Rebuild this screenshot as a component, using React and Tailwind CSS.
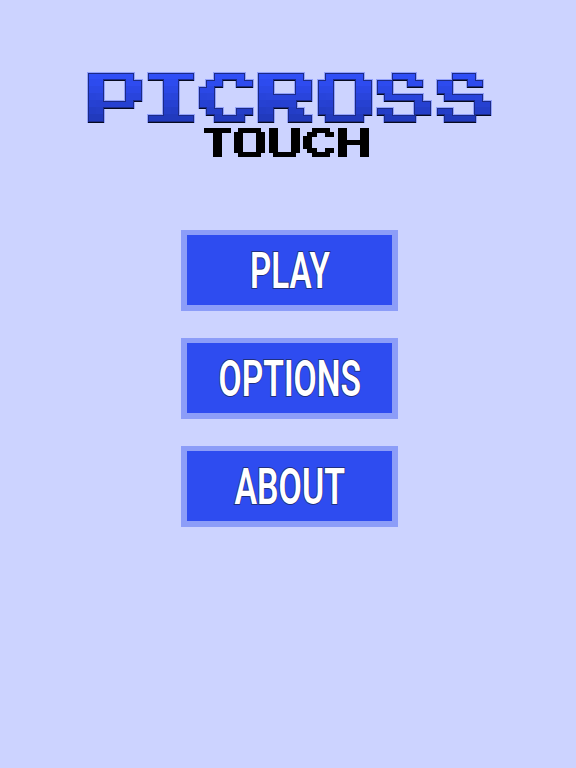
const MONO = "DejaVu Sans Mono";
const LIB = "Liberation Mono";

// How each character sits on the 7x7 block grid: font, scale (cells per em) and origin (cells).
const GLYPHS = {
  P: { font: "Liberation Sans", sx: 11.786, sy: 12.174, tx: -0.585, ty: 8.16 },
  I: { font: MONO, sx: 12.273, sy: 9.315, tx: -0.732, ty: 6.9 },
  C: { font: LIB, sx: 13.585, sy: 10.294, tx: -0.293, ty: 6.997 },
  R: { font: LIB, sx: 15.283, sy: 12.5, tx: -1.43, ty: 8.01 },
  O: { font: LIB, sx: 13.077, sy: 11.471, tx: -0.423, ty: 7.335 },
  S: { font: LIB, sx: 13.091, sy: 9.706, tx: -0.612, ty: 6.753 },
  T: { font: MONO, sx: 10.385, sy: 8.889, tx: -0.165, ty: 6.65 },
  U: { font: MONO, sx: 12.8, sy: 10, tx: -0.39, ty: 7.55 },
  H: { font: MONO, sx: 14.043, sy: 8.767, tx: -0.733, ty: 6.65 },
};

const LARGE = { id: "blocks-large", cw: 7.5, ch: 7, dx: 0.75, dy: 0, cols: [4, 11, 19, 26, 34, 41, 49], rows: [3, 10, 17, 24, 31, 38, 45], radius: "4 3" };
const SMALL = { id: "blocks-small", cw: 4.33, ch: 4, dx: 0.33, dy: 0.5, cols: [2, 6, 11, 15, 19, 24, 28], rows: [2, 6, 10, 14, 18, 22, 26], radius: "2 2" };

const TITLE = [["P", 60], ["I", 51], ["C", 59], ["R", 60], ["O", 59], ["S", 60], ["S", 54]];
const SUBTITLE = [["T", 30], ["O", 35], ["U", 34], ["C", 35], ["H", 31]];

function BlockFilter({ grid, outlined }) {
  return (
    <filter id={grid.id} filterUnits="userSpaceOnUse" x="-4" y="-4" width="66" height="60" colorInterpolationFilters="sRGB">
      {grid.cols.map((x, i) => (
        <feFlood key={"c" + i} x={x} y="0" width="1" height="52" floodColor="#000" result={"c" + i} />
      ))}
      <feMerge result="columns">
        {grid.cols.map((_, i) => <feMergeNode key={i} in={"c" + i} />)}
      </feMerge>
      {grid.rows.map((y, i) => (
        <feFlood key={"r" + i} x="0" y={y} width="58" height="1" floodColor="#000" result={"r" + i} />
      ))}
      <feMerge result="lines">
        {grid.rows.map((_, i) => <feMergeNode key={i} in={"r" + i} />)}
      </feMerge>
      <feComposite in="columns" in2="lines" operator="in" result="dots" />
      <feComponentTransfer in="SourceGraphic" result="hard">
        <feFuncA type="discrete" tableValues="0 1" />
      </feComponentTransfer>
      <feComposite in="hard" in2="dots" operator="in" />
      <feMorphology operator="dilate" radius={grid.radius} result="blocks" />
      {outlined && (
        <>
          <feMorphology in="blocks" operator="erode" radius="1" result="body" />
          <feMorphology in="blocks" operator="dilate" radius="1" result="wide" />
          <feFlood floodColor="#92a1fa" />
          <feComposite in2="wide" operator="in" result="halo" />
          <feFlood floodColor="#060a20" />
          <feComposite in2="blocks" operator="in" />
          <feOffset dy="1" result="drop" />
          <feFlood floodColor="#1b2a86" />
          <feComposite in2="blocks" operator="in" result="edge" />
          <feMerge>
            <feMergeNode in="halo" />
            <feMergeNode in="drop" />
            <feMergeNode in="edge" />
            <feMergeNode in="body" />
          </feMerge>
        </>
      )}
    </filter>
  );
}

function BlockLetter({ char, width, height, grid, shaded }) {
  const g = GLYPHS[char];
  const place = `translate(${g.tx * grid.cw + grid.dx} ${g.ty * grid.ch + grid.dy}) scale(${(g.sx * grid.cw) / 100} ${(g.sy * grid.ch) / 100})`;
  return (
    <svg width={width} height={height} className="block shrink-0 overflow-visible">
      {shaded && (
        <linearGradient id={"shade-" + char} gradientUnits="userSpaceOnUse" x1="0" x2="0" y1={(-g.ty * 100) / g.sy} y2={((7 - g.ty) * 100) / g.sy}>
          <stop offset="0" stopColor="#3050fa" />
          <stop offset="0.3" stopColor="#2c49ea" />
          <stop offset="1" stopColor="#2038b8" />
        </linearGradient>
      )}
      <g filter={`url(#${grid.id})`}>
        <text transform={place} fill={shaded ? `url(#shade-${char})` : "#000"} className="text-[100px] font-bold" style={{ fontFamily: g.font }}>
          {char}
        </text>
      </g>
    </svg>
  );
}

function MenuButton({ label, left, width }) {
  return (
    <button className="block h-[81px] w-[217px] border-x-[6px] border-t-[5px] border-b-[6px] border-[#8c9df8] bg-[#2e4cf0]">
      <svg width="205" height="70" className="block overflow-visible">
        <text
          x={left}
          y="52.5"
          textLength={width}
          lengthAdjust="spacingAndGlyphs"
          className="fill-white stroke-[#203080] font-['Roboto'] text-[49.5px] font-semibold [paint-order:stroke] [stroke-width:2px]"
        >
          {label}
        </text>
      </svg>
    </button>
  );
}

export default function App() {
  return (
    <main className="flex h-[768px] w-full flex-col items-center bg-[#ccd3ff] pt-[73px] font-['Roboto',sans-serif]">
      <svg width="0" height="0" className="block">
        <defs>
          <BlockFilter grid={LARGE} outlined />
          <BlockFilter grid={SMALL} />
        </defs>
      </svg>
      <h1 className="ml-[3px] flex h-[49px]">
        {TITLE.map(([c, w], i) => <BlockLetter key={i} char={c} width={w} height={49} grid={LARGE} shaded />)}
      </h1>
      <h2 className="mt-[6px] mr-[3px] flex h-[29px]">
        {SUBTITLE.map(([c, w], i) => <BlockLetter key={i} char={c} width={w} height={29} grid={SMALL} />)}
      </h2>
      <nav className="mt-[73px] ml-[3px] flex flex-col gap-[27px]">
        <MenuButton label="PLAY" left={63} width={80} />
        <MenuButton label="OPTIONS" left={31.5} width={142.5} />
        <MenuButton label="ABOUT" left={47.5} width={110.5} />
      </nav>
    </main>
  );
}
